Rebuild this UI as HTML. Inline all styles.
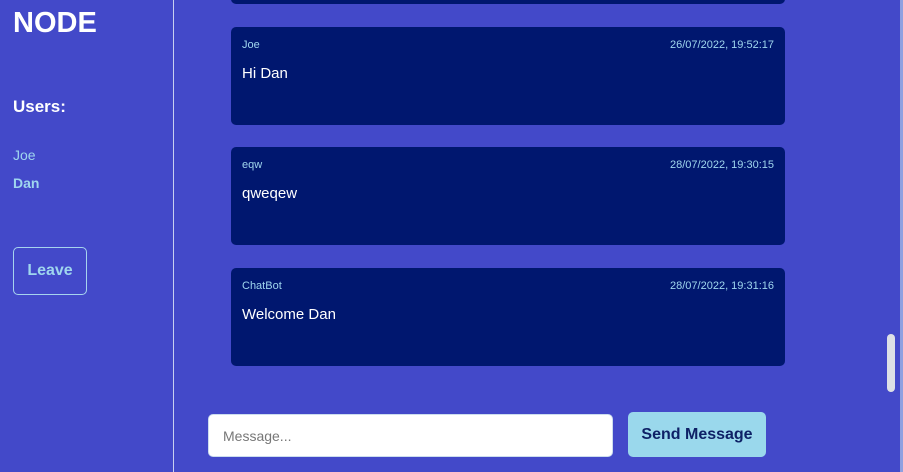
<!DOCTYPE html>
<html><head><style>
*{margin:0;padding:0;box-sizing:border-box}
body{width:903px;height:472px;overflow:hidden;background:#4349c9;font-family:"Liberation Sans",Arial,sans-serif;position:relative}
.side{position:absolute;left:0;top:0;width:174px;height:472px;border-right:1px solid #c8d0f0}
h1{position:absolute;left:13px;top:7px;color:#fff;font-size:29px;font-weight:bold}
h2{position:absolute;left:13px;top:97px;color:#fff;font-size:17px;font-weight:bold}
.u{position:absolute;left:13px;color:#9fd6ee;font-size:14px}
.leave{position:absolute;left:13px;top:247px;width:74px;height:48px;border:1px solid #a6d4ee;border-radius:5px;color:#9fd6ee;font-weight:bold;font-size:16px;text-align:center;line-height:46px}
.card{position:absolute;left:231px;width:554px;height:98px;background:#00176f;border-radius:5px;color:#fff}
.card .n{position:absolute;left:11px;top:12px;font-size:11px;color:#9fd6ee}
.card .d{position:absolute;right:11px;top:12px;font-size:11px;color:#9fd6ee}
.card .t{position:absolute;left:11px;top:38px;font-size:15px}
.inp{position:absolute;left:208px;top:414px;width:405px;height:43px;background:#fff;border-radius:5px;border:1px solid #cde;color:#777;font-size:14px;padding:13px 0 0 14px}
.btn{position:absolute;left:628px;top:412px;width:138px;height:45px;background:#9ad8ec;border-radius:5px;color:#0e2166;font-weight:bold;font-size:16px;text-align:center;line-height:45px}
.sb{position:absolute;left:887px;top:334px;width:8px;height:58px;background:#dde0e6;border-radius:4px}
.edge{position:absolute;left:900px;top:0;width:3px;height:472px;background:#8fa0e0}
</style></head><body>
<div class="side"></div>
<h1>NODE</h1>
<h2>Users:</h2>
<div class="u" style="top:147px">Joe</div>
<div class="u" style="top:175px;font-weight:bold">Dan</div>
<div class="leave">Leave</div>
<div class="card" style="top:-94px"></div>
<div class="card" style="top:27px"><span class="n">Joe</span><span class="d">26/07/2022, 19:52:17</span><span class="t">Hi Dan</span></div>
<div class="card" style="top:147px"><span class="n">eqw</span><span class="d">28/07/2022, 19:30:15</span><span class="t">qweqew</span></div>
<div class="card" style="top:268px"><span class="n">ChatBot</span><span class="d">28/07/2022, 19:31:16</span><span class="t">Welcome Dan</span></div>
<div class="inp">Message...</div>
<div class="btn">Send Message</div>
<div class="sb"></div>
<div class="edge"></div>
</body></html>
